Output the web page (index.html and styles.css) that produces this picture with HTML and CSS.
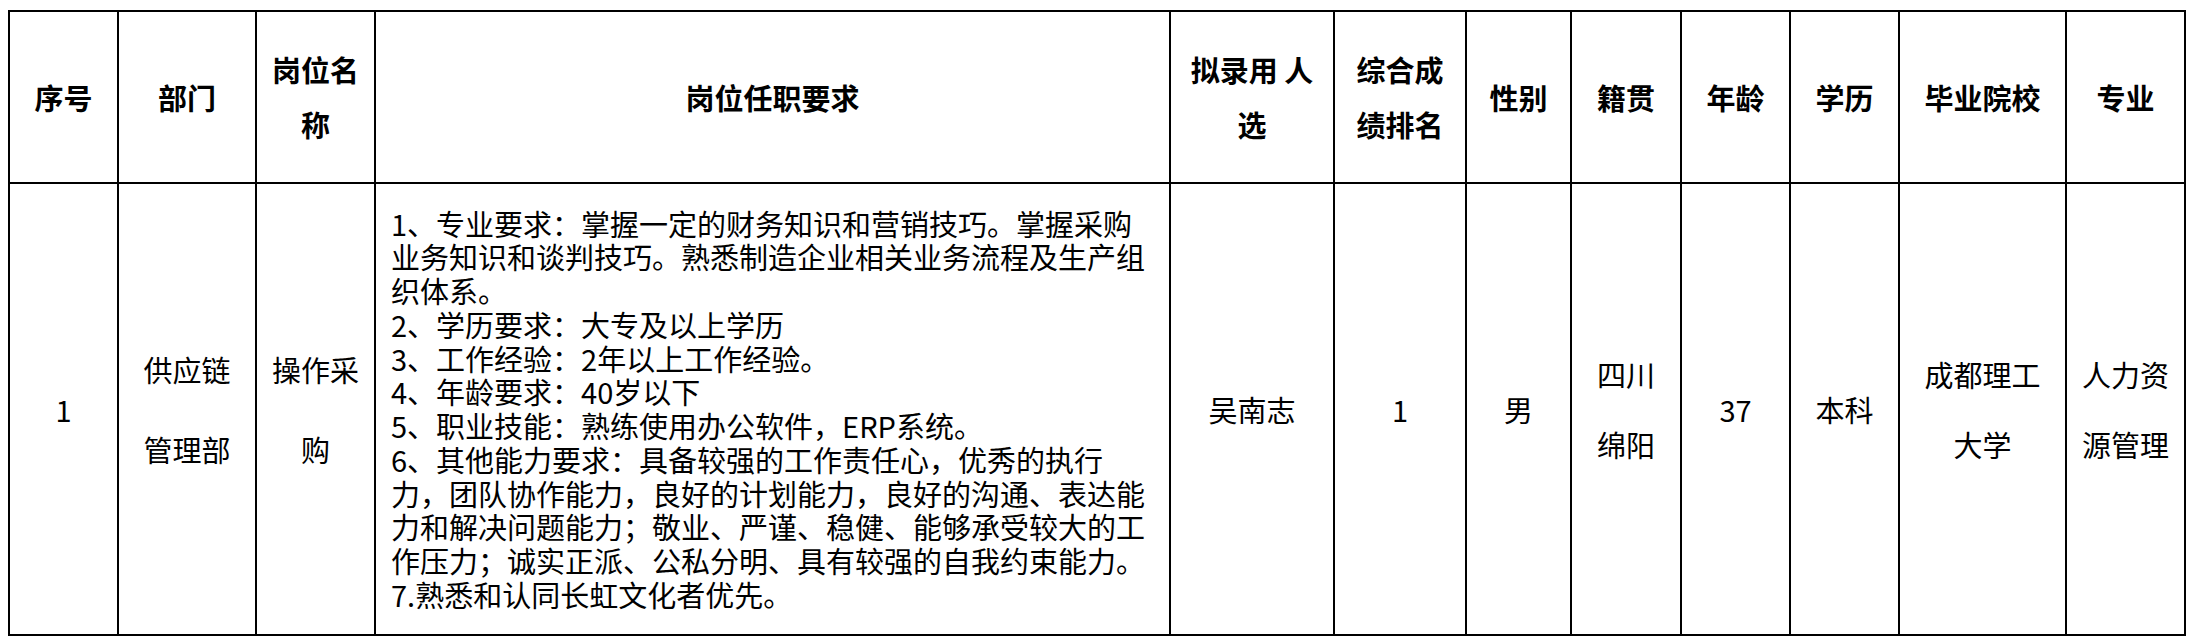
FILE: index.html
```html
<!DOCTYPE html>
<html lang="zh-CN">
<head>
<meta charset="utf-8">
<title>岗位任职要求</title>
<link rel="stylesheet" href="styles.css">
</head>
<body>
<table class="sheet">
  <colgroup>
    <col class="c-no">
    <col class="c-dept">
    <col class="c-post">
    <col class="c-req">
    <col class="c-name">
    <col class="c-rank">
    <col class="c-sex">
    <col class="c-home">
    <col class="c-age">
    <col class="c-edu">
    <col class="c-school">
    <col class="c-major">
  </colgroup>
  <thead>
    <tr class="head-row">
      <th>序号</th>
      <th>部门</th>
      <th>岗位名<br>称</th>
      <th>岗位任职要求</th>
      <th>拟录用 人<br>选</th>
      <th>综合成<br>绩排名</th>
      <th>性别</th>
      <th>籍贯</th>
      <th>年龄</th>
      <th>学历</th>
      <th>毕业院校</th>
      <th>专业</th>
    </tr>
  </thead>
  <tbody>
    <tr class="body-row">
      <td>1</td>
      <td class="wide-lines">供应链<br>管理部</td>
      <td class="wide-lines">操作采<br>购</td>
      <td class="req">1、专业要求：掌握一定的财务知识和营销技巧。掌握采购<br>业务知识和谈判技巧。熟悉制造企业相关业务流程及生产组<br>织体系。<br>2、学历要求：大专及以上学历<br>3、工作经验：2年以上工作经验。<br>4、年龄要求：40岁以下<br>5、职业技能：熟练使用办公软件，ERP系统。<br>6、其他能力要求：具备较强的工作责任心，优秀的执行<br>力，团队协作能力，良好的计划能力，良好的沟通、表达能<br>力和解决问题能力；敬业、严谨、稳健、能够承受较大的工<br>作压力；诚实正派、公私分明、具有较强的自我约束能力。<br>7.熟悉和认同长虹文化者优先。</td>
      <td>吴南志</td>
      <td>1</td>
      <td>男</td>
      <td class="mid-lines">四川<br>绵阳</td>
      <td>37</td>
      <td>本科</td>
      <td class="mid-lines">成都理工<br>大学</td>
      <td class="mid-lines">人力资<br>源管理</td>
    </tr>
  </tbody>
</table>
</body>
</html>
```

FILE: styles.css
```css
html, body {
  background: #ffffff;
}

body {
  margin: 0;
  padding: 10px 0 0 8px;
  font-family: "Noto Sans CJK SC", "Microsoft YaHei", sans-serif;
  color: #000000;
}

.sheet {
  border-collapse: collapse;
  table-layout: fixed;
  width: 2178px;
}

.c-no { width: 109px; }
.c-dept { width: 138px; }
.c-post { width: 119px; }
.c-req { width: 795px; }
.c-name { width: 164px; }
.c-rank { width: 132px; }
.c-sex { width: 105px; }
.c-home { width: 110px; }
.c-age { width: 109px; }
.c-edu { width: 109px; }
.c-school { width: 167px; }
.c-major { width: 119px; }

.sheet th,
.sheet td {
  border: 2px solid #000000;
  padding: 0;
  text-align: center;
  vertical-align: middle;
  font-size: 29px;
  line-height: 40px;
}

.head-row {
  height: 172px;
}

.sheet th {
  font-weight: 700;
  line-height: 55px;
}

.body-row {
  height: 452px;
}

.sheet td.wide-lines {
  line-height: 80px;
}

.sheet td.mid-lines {
  line-height: 70px;
}

.sheet td.req {
  text-align: left;
  padding-left: 15px;
  white-space: nowrap;
  line-height: 33.75px;
}
```
